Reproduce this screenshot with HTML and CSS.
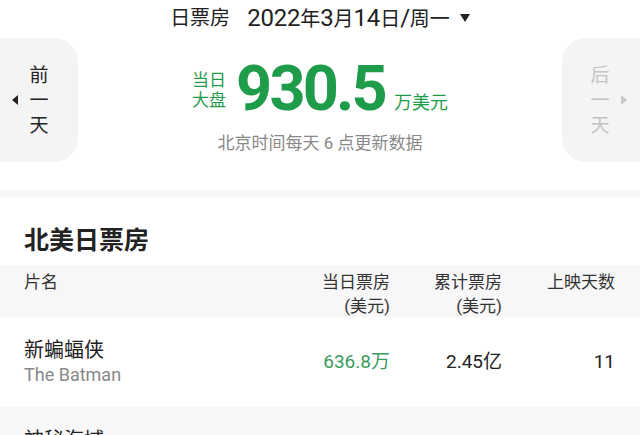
FILE: index.html
```html
<!DOCTYPE html>
<html lang="zh-CN">
<head>
    <meta charset="UTF-8">
    <meta name="viewport" content="width=device-width, initial-scale=1.0">
    <title>北美日票房</title>
    <link rel="stylesheet" href="styles.css">
</head>
<body>

    <div class="page-title">
        <span class="title-label">日票房</span>
        <span class="title-date"><span class="num">2022</span>年<span class="num">3</span>月<span class="num">14</span>日<span class="num">/</span>周一</span>
        <svg class="title-arrow" width="10" height="8" viewBox="0 0 10 8"><polygon points="0,0 10,0 5,8" fill="#222"/></svg>
    </div>

    <div class="summary">
        <div class="day-nav prev">
            <svg class="nav-arrow" width="6" height="10" viewBox="0 0 6 10"><polygon points="6,0 6,10 0,5" fill="#222"/></svg>
            <div class="nav-text">前<br>一<br>天</div>
        </div>

        <div class="summary-main">
            <div class="amount">
                <div class="amount-label">当日<br>大盘</div>
                <div class="amount-value">930.5</div>
                <div class="amount-unit">万美元</div>
            </div>
            <div class="update-note">北京时间每天 6 点更新数据</div>
        </div>

        <div class="day-nav next">
            <div class="nav-text">后<br>一<br>天</div>
            <svg class="nav-arrow" width="6" height="10" viewBox="0 0 6 10"><polygon points="0,0 6,5 0,10" fill="#c8c8c8"/></svg>
        </div>
    </div>

    <div class="band"></div>

    <h2 class="section-title">北美日票房</h2>

    <!-- Table -->
    <div class="table">
        <div class="table-head">
            <div class="col-name">片名</div>
            <div class="col-num">当日票房<br>(美元)</div>
            <div class="col-num">累计票房<br>(美元)</div>
            <div class="col-num">上映天数</div>
        </div>

        <div class="table-row">
            <div class="col-name">
                <div class="movie-cn">新蝙蝠侠</div>
                <div class="movie-en">The Batman</div>
            </div>
            <div class="col-num value green">636.8万</div>
            <div class="col-num value">2.45亿</div>
            <div class="col-num value">11</div>
        </div>

        <div class="table-row alt">
            <div class="col-name">
                <div class="movie-cn">神秘海域</div>
                <div class="movie-en">Uncharted</div>
            </div>
            <div class="col-num value green">198.2万</div>
            <div class="col-num value">1.01亿</div>
            <div class="col-num value">25</div>
        </div>
    </div>

</body>
</html>
```

FILE: styles.css
```css
:root {
    --green: #1f9c4a;
    --green-light: #3a9c5e;
    --text-color: #222222;
    --subtitle-color: #888888;
    --faded-color: #c4c4c4;
    --card-bg: #f4f4f4;
    --band-bg: #f7f7f7;
}

body {
    margin: 0;
    width: 640px;
    height: 435px;
    overflow: hidden;
    background-color: #ffffff;
    color: var(--text-color);
    font-family: Roboto, "Noto Sans CJK SC", sans-serif;
}

.page-title {
    height: 38px;
    display: flex;
    justify-content: center;
    align-items: center;
    font-size: 20px;
    line-height: 36px;
    padding-bottom: 2px;
    box-sizing: border-box;
}

.title-label {
    margin-right: 17px;
}

.title-date .num {
    font-size: 24px;
    letter-spacing: -0.2px;
}

.title-arrow {
    margin-left: 10px;
}

.summary {
    display: flex;
    height: 124px;
}

.day-nav {
    width: 78px;
    display: flex;
    align-items: center;
    background-color: var(--card-bg);
    box-sizing: border-box;
}

.day-nav.prev {
    border-radius: 0 24px 24px 0;
    padding-left: 12px;
}

.day-nav.next {
    border-radius: 24px 0 0 24px;
    padding-left: 28px;
    color: var(--faded-color);
}

.nav-text {
    width: 20px;
    font-size: 19px;
    line-height: 25px;
    text-align: center;
}

.prev .nav-text {
    margin-left: 11px;
}

.next .nav-text {
    margin-right: 11px;
}

.summary-main {
    flex: 1;
    display: flex;
    flex-direction: column;
    align-items: center;
    padding-top: 19px;
}

.amount {
    display: flex;
    align-items: flex-end;
    height: 63px;
    color: var(--green);
}

.amount-label {
    font-size: 17px;
    line-height: 20px;
    margin-bottom: 10px;
    margin-right: 10px;
}

.amount-value {
    font-size: 63px;
    line-height: 63px;
    font-weight: 700;
    letter-spacing: -2.8px;
}

.amount-unit {
    font-size: 18px;
    line-height: 20px;
    margin-bottom: 7px;
    margin-left: 9px;
}

.update-note {
    margin-top: 12px;
    font-size: 17px;
    line-height: 22px;
    color: var(--subtitle-color);
}

.band {
    margin-top: 28px;
    height: 8px;
    background-color: #f8f8f8;
}

.section-title {
    margin: 27px 0 8px 24px;
    font-size: 25px;
    line-height: 32px;
    font-weight: 700;
}

.table-head,
.table-row {
    display: grid;
    grid-template-columns: 1fr 112px 112px 113px;
    padding: 0 25px 0 24px;
}

.table-head {
    height: 52px;
    padding-top: 5px;
    box-sizing: border-box;
    background-color: var(--band-bg);
    font-size: 17px;
    line-height: 24px;
    color: #333333;
}

.col-num {
    text-align: right;
}

.table-row {
    height: 90px;
    align-items: center;
    box-sizing: border-box;
}

.table-row.alt {
    background-color: #f8f8f8;
}

.movie-cn {
    font-size: 20px;
    line-height: 26px;
}

.movie-en {
    font-size: 18px;
    line-height: 24px;
    color: var(--subtitle-color);
}

.value {
    font-size: 19px;
    line-height: 26px;
}

.value.green {
    color: var(--green-light);
}
```
